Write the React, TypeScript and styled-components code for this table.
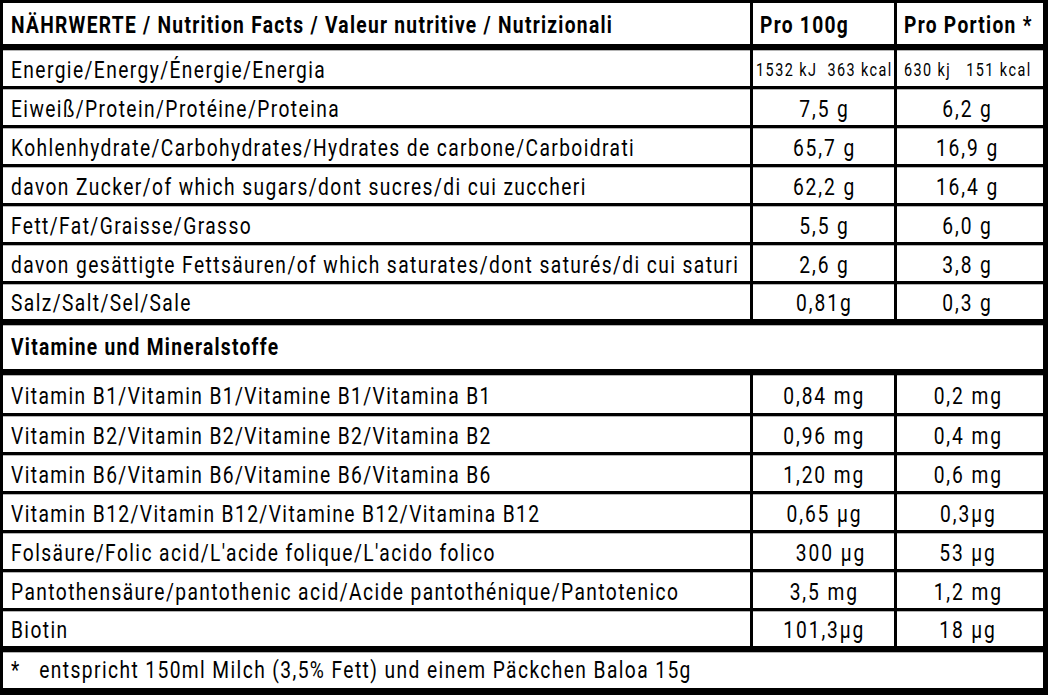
import React from "react";
import styled, { createGlobalStyle } from "styled-components";

const GlobalStyle = createGlobalStyle`
  html, body { margin: 0; padding: 0; background: #ffffff; }
  body {
    font-family: Roboto, "Liberation Sans", Arial, sans-serif;
    color: #000;
  }
`;

const Table = styled.div`
  width: 1048px;
  box-sizing: border-box;
  border-left: 3px solid #000;
  border-top: 3px solid #000;
  border-right: 5px solid #000;
  border-bottom: 7px solid #000;
  background: #fff;
  display: flex;
  flex-direction: column;
`;

const Row = styled.div<{ $top?: number; $h: number }>`
  display: grid;
  grid-template-columns: 747px 144px 143px;
  height: ${(p) => p.$h}px;
  border-top: ${(p) => p.$top ?? 0}px solid #000;
  box-shadow: ${(p) => (p.$top ? "inset 0 1px 0 #b4b4b4" : "none")};
`;

const FullRow = styled.div<{ $top: number; $h: number }>`
  display: flex;
  align-items: center;
  height: ${(p) => p.$h}px;
  border-top: ${(p) => p.$top}px solid #000;
  box-shadow: inset 0 1px 0 #b4b4b4;
  padding: 0 0 0 8px;
  overflow: hidden;
`;

const Label = styled.div`
  display: flex;
  align-items: center;
  padding: 3px 0 0 8px;
  overflow: hidden;
`;

const Value = styled.div<{ $head?: boolean }>`
  display: flex;
  align-items: center;
  justify-content: ${(p) => (p.$head ? "flex-start" : "center")};
  padding: ${(p) => (p.$head ? "2px 0 0 7px" : "3px 0 0 2px")};
  border-left: 3px solid #000;
  overflow: visible;
`;

const Txt = styled.span<{ $bold?: boolean; $small?: boolean; $center?: boolean; $num?: boolean }>`
  display: inline-block;
  white-space: pre;
  font-size: ${(p) => (p.$small ? 18 : 24)}px;
  font-weight: ${(p) => (p.$bold ? 700 : 400)};
  letter-spacing: ${(p) => (p.$bold ? 1.6 : p.$small ? 1.8 : p.$num ? 2.4 : 1.76)}px;
  line-height: 1;
  transform: scaleX(0.8);
  transform-origin: ${(p) => (p.$center ? "center" : "left")} center;
`;

type R = { label: string; a: string; b: string; small?: boolean; h: number; top: number };

const nutrition: R[] = [
  { label: "Energie/Energy/Énergie/Energia", a: "1532 kJ  363 kcal", b: "630 kj   151 kcal", small: true, h: 36, top: 6 },
  { label: "Eiweiß/Protein/Protéine/Proteina", a: "7,5 g", b: "6,2 g", h: 36, top: 3 },
  { label: "Kohlenhydrate/Carbohydrates/Hydrates de carbone/Carboidrati", a: "65,7 g", b: "16,9 g", h: 36, top: 3 },
  { label: "davon Zucker/of which sugars/dont sucres/di cui zuccheri", a: "62,2 g", b: "16,4 g", h: 36, top: 3 },
  { label: "Fett/Fat/Graisse/Grasso", a: "5,5 g", b: "6,0 g", h: 36, top: 3 },
  { label: "davon gesättigte Fettsäuren/of which saturates/dont saturés/di cui saturi", a: "2,6 g", b: "3,8 g", h: 36, top: 3 },
  { label: "Salz/Salt/Sel/Sale", a: "0,81g", b: "0,3 g", h: 35, top: 3 },
];

const vitamins: R[] = [
  { label: "Vitamin B1/Vitamin B1/Vitamine B1/Vitamina B1", a: "0,84 mg", b: "0,2 mg", h: 38, top: 6 },
  { label: "Vitamin B2/Vitamin B2/Vitamine B2/Vitamina B2", a: "0,96 mg", b: "0,4 mg", h: 36, top: 3 },
  { label: "Vitamin B6/Vitamin B6/Vitamine B6/Vitamina B6", a: "1,20 mg", b: "0,6 mg", h: 36, top: 3 },
  { label: "Vitamin B12/Vitamin B12/Vitamine B12/Vitamina B12", a: "0,65 µg", b: "0,3µg", h: 36, top: 3 },
  { label: "Folsäure/Folic acid/L'acide folique/L'acido folico", a: "  300 µg", b: "53 µg", h: 36, top: 3 },
  { label: "Pantothensäure/pantothenic acid/Acide pantothénique/Pantotenico", a: "3,5 mg", b: "1,2 mg", h: 36, top: 3 },
  { label: "Biotin", a: "101,3µg", b: "18 µg", h: 35, top: 3 },
];

const DataRow = ({ r }: { r: R }) => (
  <Row $h={r.h} $top={r.top}>
    <Label>
      <Txt>{r.label}</Txt>
    </Label>
    <Value>
      <Txt $small={r.small} $num $center>
        {r.a}
      </Txt>
    </Value>
    <Value>
      <Txt $small={r.small} $num $center>
        {r.b}
      </Txt>
    </Value>
  </Row>
);

export default function App() {
  return (
    <>
      <GlobalStyle />
      <Table>
        <Row $h={41}>
          <Label>
            <Txt $bold>NÄHRWERTE / Nutrition Facts / Valeur nutritive / Nutrizionali</Txt>
          </Label>
          <Value $head>
            <Txt $bold>Pro 100g</Txt>
          </Value>
          <Value $head>
            <Txt $bold>Pro Portion *</Txt>
          </Value>
        </Row>
        {nutrition.map((r) => (
          <DataRow key={r.label} r={r} />
        ))}
        <FullRow $top={6} $h={44}>
          <Txt $bold>Vitamine und Mineralstoffe</Txt>
        </FullRow>
        {vitamins.map((r) => (
          <DataRow key={r.label} r={r} />
        ))}
        <FullRow $top={6} $h={36}>
          <Txt>{"*   entspricht 150ml Milch (3,5% Fett) und einem Päckchen Baloa 15g"}</Txt>
        </FullRow>
      </Table>
    </>
  );
}
